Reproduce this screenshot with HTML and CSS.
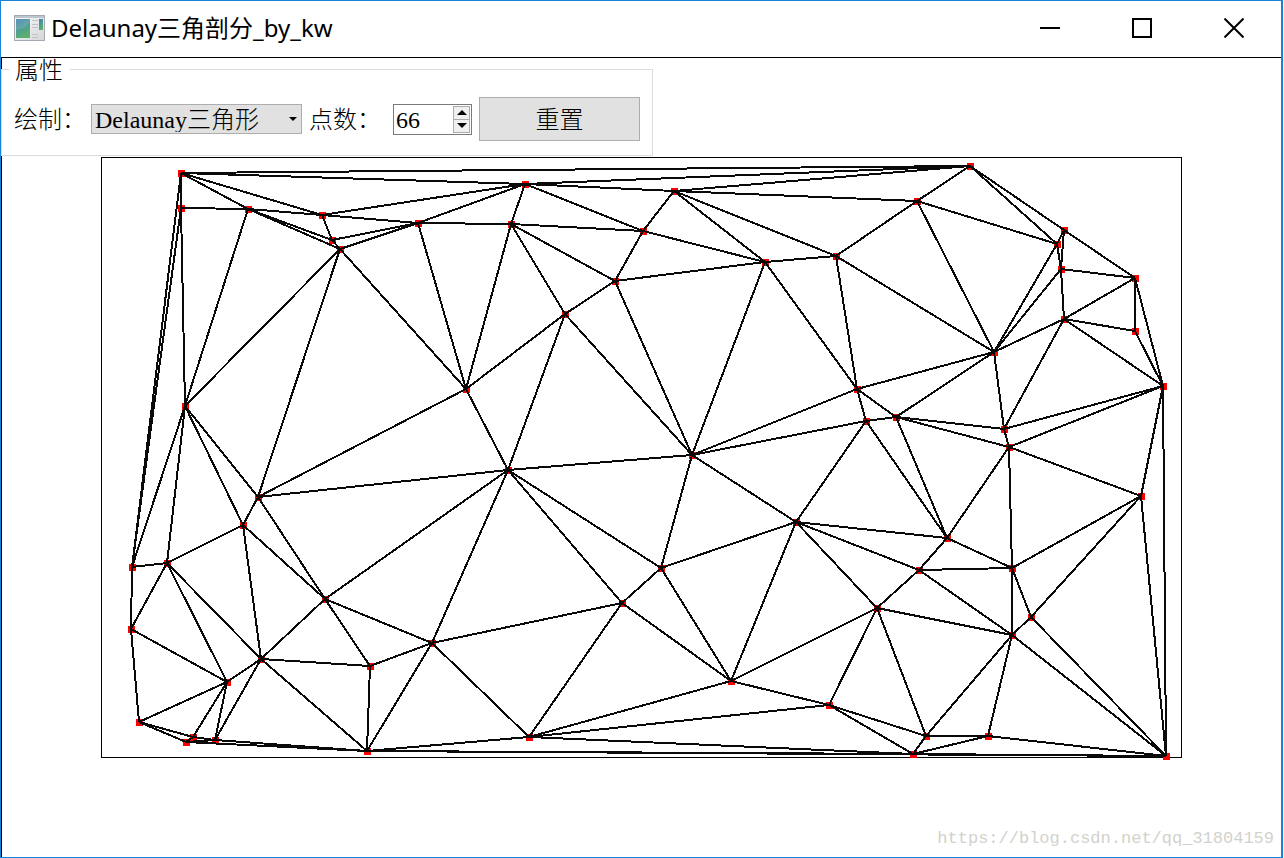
FILE: index.html
```html
<!DOCTYPE html>
<html lang="zh-CN">
<head>
<meta charset="utf-8">
<title>Delaunay三角剖分_by_kw</title>
<link rel="stylesheet" href="styles.css">
</head>
<body>
<div class="window">
  <header class="titlebar">
    <svg class="app-icon" viewBox="0 0 32 27" aria-hidden="true">
      <defs>
        <linearGradient id="screen" x1="0" y1="0" x2="0.4" y2="1">
          <stop offset="0" stop-color="#3f7fae"/>
          <stop offset="0.5" stop-color="#4d9a9a"/>
          <stop offset="1" stop-color="#5cb06c"/>
        </linearGradient>
        <linearGradient id="frame" x1="0" y1="0" x2="1" y2="1">
          <stop offset="0" stop-color="#fafafa"/>
          <stop offset="1" stop-color="#d4d6d8"/>
        </linearGradient>
      </defs>
      <rect x="0.5" y="0.5" width="30" height="25" fill="url(#frame)" stroke="#a4abb2"/>
      <path d="M1 2h29" stroke="#bcc6ce" stroke-width="2"/>
      <rect x="2" y="4" width="14" height="19" fill="url(#screen)"/>
      <path d="M2 15q8-1 14-7V4H2z" fill="#fff" opacity="0.13"/>
      <path d="M18 5.500h6M18 9.500h6M18 12.500h6M18 19.500h6M18 22.500h6" stroke="#c0c3c6"/>
      <rect x="25" y="4" width="4" height="11" fill="url(#screen)"/>
    </svg>
    <h1 class="title">Delaunay三角剖分_by_kw</h1>
    <div class="window-buttons">
      <button class="window-button" type="button" aria-label="最小化"><svg viewBox="0 0 20 20"><path d="M0 10h20"/></svg></button>
      <button class="window-button" type="button" aria-label="最大化"><svg viewBox="0 0 20 20"><path d="M1 1h18v18H1z"/></svg></button>
      <button class="window-button" type="button" aria-label="关闭"><svg viewBox="0 0 20 20"><path class="cross" d="M0.500 0.500l19 19M19.500 0.500l-19 19"/></svg></button>
    </div>
  </header>
  <main class="content">
    <fieldset class="properties">
      <legend>属性</legend>
      <div class="controls">
        <label for="mode">绘制：</label>
        <div class="combo">
          <select id="mode"><option>Delaunay三角形</option></select>
        </div>
        <label class="count-label" for="count">点数：</label>
        <div class="spinner">
          <input id="count" type="number" value="66">
          <div class="steps">
            <button type="button" aria-label="增加"><svg viewBox="0 0 10 5"><path d="M5 0l5 5H0z"/></svg></button>
            <button type="button" aria-label="减少"><svg viewBox="0 0 10 5"><path d="M0 0h10L5 5z"/></svg></button>
          </div>
        </div>
        <button class="reset" type="button">重置</button>
      </div>
    </fieldset>
    <svg class="plot" viewBox="101 157 1081 601" role="img" aria-label="Delaunay三角形">
      <rect class="bounds" x="101.500" y="157.500" width="1080" height="600"/>
      <path class="points" id="points"/>
      <path class="edges" id="edges"/>
    </svg>
    <footer class="watermark">https://blog.csdn.net/qq_31804159</footer>
  </main>
</div>
<script src="mesh.js"></script>
</body>
</html>
```
FILE: styles.css
```css
* { box-sizing: border-box; }

body {
  margin: 0;
  background: #fff;
  color: #000;
  font: 300 24px/24px "Liberation Serif", "Noto Sans CJK SC", serif;
}

button, input, select { font: inherit; color: inherit; margin: 0; padding: 0; border-radius: 0; }

.window {
  display: flex;
  flex-direction: column;
  min-height: 100vh;
  margin-right: 1px;
  border: 1px solid #1883d7;
  border-right-width: 2px;
}

.titlebar {
  display: flex;
  align-items: center;
  height: 56px;
  padding: 0 1px 2px 13px;
}

.app-icon { width: 32px; height: 27px; margin-right: 5px; }

.title {
  flex: 1;
  margin: 0;
  font: 400 24px/32px "Noto Sans", "Noto Sans CJK SC", sans-serif;
}

.window-buttons { display: flex; align-self: stretch; }

.window-button {
  display: flex;
  align-items: center;
  justify-content: center;
  width: 92px;
  border: 0;
  background: none;
}

.window-button svg {
  width: 20px;
  height: 20px;
  fill: none;
  stroke: #000;
  stroke-width: 2;
  shape-rendering: crispEdges;
}

.window-button .cross { shape-rendering: auto; }

.content {
  flex: 1;
  display: flex;
  flex-direction: column;
  border: solid #000;
  border-width: 1px 0 0 1px;
}

.properties {
  align-self: flex-start;
  margin: 0 0 1px -1px;
  padding: 16px 12px 14px 12px;
  border: 1px solid #dcdcdc;
  background: linear-gradient(#fff, #fff);
}

.properties legend {
  height: 23px;
  margin-left: -5px;
  padding: 0 7px 0 6px;
  line-height: 26px;
}

.controls { display: flex; align-items: center; gap: 7px; }

.controls label {
  width: 70px;
  padding-top: 2px;
  white-space: nowrap;
}

.controls .count-label { margin-right: 7px; }

.combo { position: relative; }

.combo select {
  display: block;
  width: 211px;
  height: 30px;
  padding: 2px 0 0 3px;
  appearance: none;
  border: 1px solid #adadad;
  background: #e1e1e1;
}

.combo::after {
  content: "";
  position: absolute;
  top: 13px;
  right: 5px;
  border: 4px solid transparent;
  border-top-color: #000;
  border-bottom: 0;
  pointer-events: none;
}

.spinner {
  display: flex;
  width: 79px;
  height: 31px;
  padding: 1px;
  border: 1px solid #7a7a7a;
}

.spinner input {
  flex: 1;
  min-width: 0;
  padding: 2px 0 0 1px;
  border: 0;
  background: none;
  appearance: textfield;
}

.spinner input::-webkit-inner-spin-button { appearance: none; margin: 0; }

.steps { display: flex; flex-direction: column; width: 17px; }

.steps button {
  display: flex;
  flex: 1;
  align-items: center;
  justify-content: center;
  border: 1px solid #acacac;
  background: #f0f0f0;
}

.steps button + button { border-top: 0; }
.steps svg { width: 10px; height: 5px; }

.reset {
  width: 161px;
  height: 44px;
  padding-top: 2px;
  border: 1px solid #adadad;
  background: #e1e1e1;
}

.plot {
  align-self: center;
  width: 100%;
  max-width: 1081px;
  overflow: visible;
  shape-rendering: crispEdges;
}

.bounds { fill: none; stroke: #000; }
.points { fill: #f00; }
.edges { fill: none; stroke: #0a0a0a; stroke-width: 2; }

.watermark {
  margin-top: auto;
  padding: 0 7px 6px;
  color: #d2d2cc;
  font: 17px/24px "Liberation Mono", monospace;
  text-align: right;
}
```
FILE: mesh.js
```js
const points = {
  A: [181, 173], B: [181, 208], C: [248, 209], D: [322, 215], E: [332, 240], F: [340, 249],
  G: [418, 223], H: [525, 184], I: [511, 224], J: [643, 231], K: [674, 191], L: [615, 281],
  M: [565, 314], N: [765, 262], O: [836, 256], P: [917, 201], Q: [970, 166], R: [1064, 230],
  S: [1057, 244], T: [1061, 269], U: [1135, 278], V: [1064, 319], W: [1135, 331], X: [994, 352],
  Y: [1163, 386], Z: [857, 389], a: [896, 417], b: [866, 421], c: [1004, 429], d: [1009, 447],
  e: [1141, 496], f: [466, 389], g: [692, 455], h: [508, 470], i: [185, 406], j: [258, 497],
  k: [243, 525], l: [132, 567], m: [167, 563], n: [325, 599], o: [131, 629], p: [261, 659],
  q: [227, 682], r: [139, 722], s: [193, 737], t: [186, 742], u: [215, 740], v: [370, 666],
  w: [432, 643], x: [367, 751], y: [529, 737], z: [622, 603], 1: [661, 568], 2: [731, 681],
  3: [796, 522], 4: [947, 538], 5: [919, 570], 6: [877, 608], 7: [1012, 568], 8: [1012, 635],
  9: [1031, 617], "@": [829, 705], "#": [926, 736], "$": [988, 736], "%": [913, 754], "&": [1166, 756]
};

// Each entry: a vertex, then the vertices it is joined to.
const links = [
  "ABCDHQl", "BCil", "CDEFi", "DHGE", "EGF", "FGijf", "GHIf", "HIJKQ", "IJLMf", "JKLN",
  "KQPON", "LMNg", "Mfhg", "NOgZ", "OPXZ", "PQSX", "QSR", "RSTU", "STX", "TXUV", "UVWY",
  "VWYXc", "WY", "XZac", "Ycde&", "Zgba", "abcd4", "bg34", "cd", "de74", "e79&", "fhj",
  "gh13", "hjnwz1", "ijkml", "jkn", "kmnp", "lmo", "mopq", "npvw", "oqr", "pqvxu", "qrsu",
  "rst", "stu", "tux", "ux", "vwx", "wxyz", "xy%&", "yz2@%", "z12", "123", "236@", "3456",
  "457", "5678", "68@#", "789", "89#$&", "9&", "@#%", "#$%", "$%&", "%&"
];

document.getElementById("points").setAttribute("d",
  Object.values(points).map(([x, y]) => `M${x - 3} ${y - 3}h7v7h-7z`).join(""));

document.getElementById("edges").setAttribute("d",
  links.map(([from, ...ends]) =>
    ends.map(end => `M${points[from]}L${points[end]}`).join("")).join(""));
```
